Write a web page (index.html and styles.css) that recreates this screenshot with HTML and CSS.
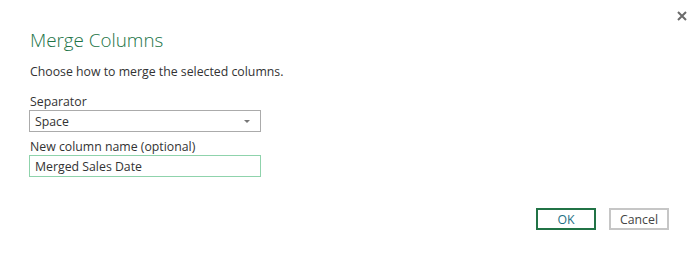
FILE: index.html
```html
<!DOCTYPE html>
<html lang="en">
<head>
<meta charset="UTF-8" />
<title>Merge Columns</title>
<link rel="stylesheet" href="styles.css">
</head>
<body>
  <div class="dialog">
    <button class="close-btn" aria-label="Close">
      <svg width="10" height="10" viewBox="0 0 10 10"><path d="M1 1 L9 9 M9 1 L1 9" stroke="#6b6b6b" stroke-width="2"/></svg>
    </button>
    <h1 class="title">Merge Columns</h1>
    <p class="intro">Choose how to merge the selected columns.</p>

    <div class="field">
      <label class="label" for="separator">Separator</label>
      <div class="select">
        <span class="select-value" id="separator">Space</span>
        <span class="caret"></span>
      </div>
    </div>

    <div class="field">
      <label class="label" for="colname">New column name (optional)</label>
      <input class="text-input" id="colname" type="text" value="Merged Sales Date" />
    </div>

    <div class="actions">
      <button class="btn btn-primary">OK</button>
      <button class="btn">Cancel</button>
    </div>
  </div>
</body>
</html>
```

FILE: styles.css
```css
* {
  box-sizing: border-box;
}

body {
  margin: 0;
  background: #fff;
  font-family: "Open Sans", "Segoe UI", sans-serif;
  color: #333;
}

.dialog {
  position: relative;
  width: 699px;
  height: 261px;
  padding: 27px 30px 0 29px;
}

.close-btn {
  position: absolute;
  top: 8px;
  right: 11px;
  width: 12px;
  height: 12px;
  padding: 1px;
  border: none;
  background: none;
  cursor: pointer;
}

.title {
  margin: 0 0 0 1px;
  font-size: 18.8px;
  font-weight: 300;
  color: #217346;
  line-height: 26px;
}

.intro {
  margin: 10px 0 0 1px;
  font-size: 12.3px;
  line-height: 17px;
}

.field {
  display: flex;
  flex-direction: column;
  width: 232px;
}

.field:first-of-type {
  margin-top: 13px;
}

.label {
  margin-left: 1px;
  font-size: 12.3px;
  line-height: 17px;
}

.select {
  display: flex;
  align-items: center;
  justify-content: space-between;
  height: 22px;
  border: 1px solid #ababab;
  padding: 0 10px 0 5px;
  font-size: 12.3px;
  margin-bottom: 6px;
}

.caret {
  width: 0;
  height: 0;
  border-left: 3px solid transparent;
  border-right: 3px solid transparent;
  border-top: 3px solid #777;
}

.text-input {
  height: 22px;
  border: 1px solid #8fd3ac;
  padding: 0 5px;
  font-family: inherit;
  font-size: 12.3px;
  color: #333;
  outline: none;
}

.actions {
  display: flex;
  justify-content: flex-end;
  gap: 13px;
  margin-top: 31px;
}

.btn {
  width: 60px;
  height: 22px;
  border: 2px solid #c6c6c6;
  background: #fff;
  font-family: inherit;
  font-size: 12.3px;
  color: #444;
  padding: 0;
  cursor: pointer;
}

.btn-primary {
  border-color: #217346;
  color: #1e6f84;
}
```
